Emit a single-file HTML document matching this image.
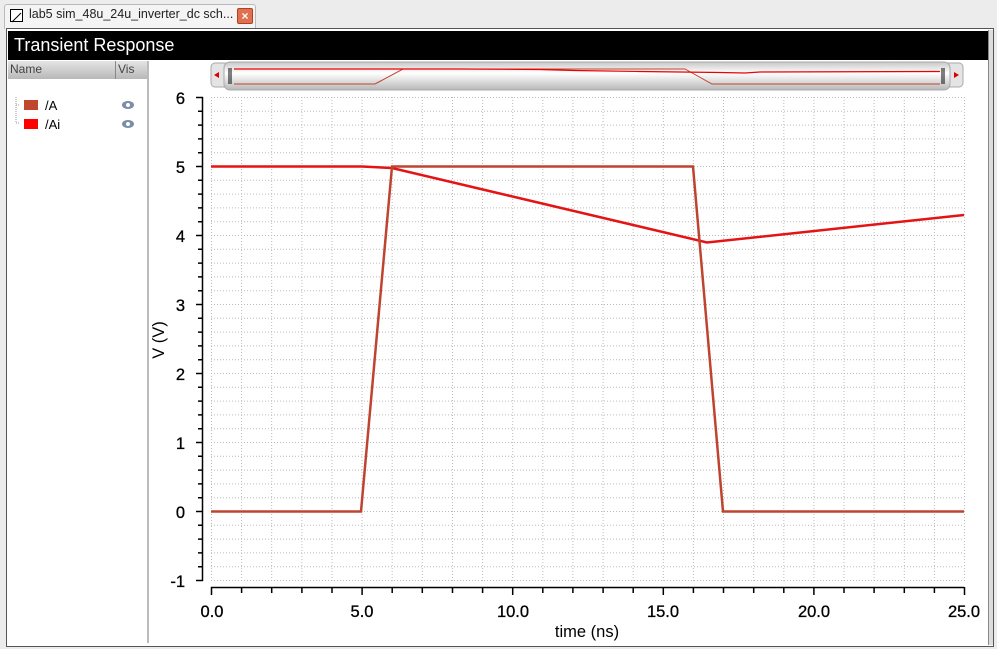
<!DOCTYPE html>
<html><head><meta charset="utf-8"><style>
body{margin:0;width:997px;height:649px;background:#ececec;overflow:hidden;font-family:"Liberation Sans",sans-serif;position:relative}
.abs{position:absolute}
</style></head><body>
<div class="abs" style="left:4px;top:4px;width:250px;height:24px;background:#f4f4f4;border:1px solid #bbb;border-bottom:none;border-radius:3px 3px 0 0"></div>
<div class="abs" style="left:10px;top:9px;width:11px;height:11px;border:1px solid #000;background:#fff"><svg width="11" height="11"><line x1="1" y1="10" x2="10" y2="1" stroke="#000"/></svg></div>
<div class="abs" style="left:29px;top:7px;font-size:12.5px;color:#222">lab5 sim_48u_24u_inverter_dc sch...</div>
<div class="abs" style="left:237px;top:8px;width:14px;height:14px;background:#e07050;border:1px solid #b04020;border-radius:2px;color:#fff;font-size:12px;line-height:14px;text-align:center;font-weight:bold">×</div>
<div class="abs" style="left:6px;top:28px;width:986px;height:617px;background:#fff;border:1px solid #555"></div>
<div class="abs" style="left:8px;top:31px;width:980px;height:29px;background:#000;color:#fff;font-size:18px;line-height:29px;padding-left:6px;box-sizing:border-box">Transient Response</div>
<div class="abs" style="left:988px;top:30px;width:4px;height:615px;background:#ddd;border-left:1px solid #888"></div>
<div class="abs" style="left:8px;top:61px;width:140px;height:18px;background:linear-gradient(#e4e4e4,#b8b8b8)"></div>
<div class="abs" style="left:115px;top:61px;width:1px;height:18px;background:#888"></div>
<div class="abs" style="left:10px;top:62px;font-size:12px;color:#444">Name</div>
<div class="abs" style="left:118px;top:62px;font-size:12px;color:#444">Vis</div>
<div class="abs" style="left:147px;top:61px;width:2px;height:582px;background:#bbb"></div>
<svg class="abs" style="left:8px;top:95px" width="140" height="40">
<path d="M8 2V28M8 10H12M8 28H12" stroke="#999" stroke-dasharray="1 1"/>
<rect x="16" y="5" width="14" height="10" fill="#c0462e"/><rect x="16" y="24" width="14" height="10" fill="#f00"/>
<text x="37" y="15" font-size="13" font-family="Liberation Sans">/A</text><text x="37" y="34" font-size="13" font-family="Liberation Sans">/Ai</text>
<ellipse cx="120" cy="10" rx="6" ry="4" fill="#7a8ea8"/><circle cx="120" cy="10" r="2" fill="#fff"/>
<ellipse cx="120" cy="29" rx="6" ry="4" fill="#7a8ea8"/><circle cx="120" cy="29" r="2" fill="#fff"/>
</svg>
<svg class="abs" style="left:0;top:0" width="997" height="649" font-family="Liberation Sans">
<defs><linearGradient id="g" x1="0" y1="0" x2="0" y2="1"><stop offset="0" stop-color="#c8c8c8"/><stop offset="0.4" stop-color="#fff"/><stop offset="1" stop-color="#b8b8b8"/></linearGradient></defs>
<rect x="211" y="63" width="752" height="24" rx="4" fill="#e4e4e4" stroke="#aaa"/>
<rect x="224" y="62" width="726" height="28" rx="6" fill="url(#g)" stroke="#aaa"/>
<path d="M214 75l5-3v6z M959 75l-5-3v6z" fill="#d00"/>
<path d="M229 68v16M231 68v16M942 68v16M944 68v16" stroke="#000"/>
<path d="M234 84H375L403 69H685L712 84H940" fill="none" stroke="#c0462e"/>
<path d="M234 69H460L540 69.5L575 70.5L640 71.5L720 72.5L745 73L760 72L940 71.5" fill="none" stroke="#e00" stroke-width="1.2"/>
<g stroke="#bbb" stroke-dasharray="1 2" stroke-width="1">
<path d="M211 97.5H964M211 111.3H964M211 125.1H964M211 138.9H964M211 152.7H964M211 166.5H964M211 180.3H964M211 194.1H964M211 207.9H964M211 221.7H964M211 235.5H964M211 249.3H964M211 263.1H964M211 276.9H964M211 290.7H964M211 304.5H964M211 318.3H964M211 332.1H964M211 345.9H964M211 359.7H964M211 373.5H964M211 387.3H964M211 401.1H964M211 414.9H964M211 428.7H964M211 442.5H964M211 456.3H964M211 470.1H964M211 483.9H964M211 497.7H964M211 511.5H964M211 525.3H964M211 539.1H964M211 552.9H964M211 566.7H964M211 580.5H964"/>
<path d="M211.5 97V581M241.6 97V581M271.7 97V581M301.9 97V581M332 97V581M362.1 97V581M392.2 97V581M422.3 97V581M452.5 97V581M482.6 97V581M512.7 97V581M542.8 97V581M572.9 97V581M603.1 97V581M633.2 97V581M663.3 97V581M693.4 97V581M723.5 97V581M753.7 97V581M783.8 97V581M813.9 97V581M844 97V581M874.1 97V581M904.3 97V581M934.4 97V581M964.5 97V581"/>
</g>
<g stroke="#000" stroke-width="1.5" fill="none">
<path d="M202.5 97V581"/>
<path d="M196 97.5H203M198 111.3H203M198 125.1H203M198 138.9H203M198 152.7H203M196 166.5H203M198 180.3H203M198 194.1H203M198 207.9H203M198 221.7H203M196 235.5H203M198 249.3H203M198 263.1H203M198 276.9H203M198 290.7H203M196 304.5H203M198 318.3H203M198 332.1H203M198 345.9H203M198 359.7H203M196 373.5H203M198 387.3H203M198 401.1H203M198 414.9H203M198 428.7H203M196 442.5H203M198 456.3H203M198 470.1H203M198 483.9H203M198 497.7H203M196 511.5H203M198 525.3H203M198 539.1H203M198 552.9H203M198 566.7H203M196 580.5H203"/>
<path d="M211 587.5H964"/>
<path d="M211.5 587V595M241.6 587V593M271.7 587V593M301.9 587V593M332 587V593M362.1 587V595M392.2 587V593M422.3 587V593M452.5 587V593M482.6 587V593M512.7 587V595M542.8 587V593M572.9 587V593M603.1 587V593M633.2 587V593M663.3 587V595M693.4 587V593M723.5 587V593M753.7 587V593M783.8 587V593M813.9 587V595M844 587V593M874.1 587V593M904.3 587V593M934.4 587V593M964.5 587V595"/>
</g>
<g font-size="16.5" text-anchor="end" fill="#000" stroke="#000" stroke-width="0.3">
<text x="185" y="104">6</text><text x="185" y="173">5</text><text x="185" y="242">4</text><text x="185" y="311">3</text><text x="185" y="380">2</text><text x="185" y="449">1</text><text x="185" y="518">0</text><text x="185" y="587">-1</text>
</g>
<g font-size="16.5" text-anchor="middle" fill="#000" stroke="#000" stroke-width="0.3">
<text x="212" y="617">0.0</text><text x="362" y="617">5.0</text><text x="513" y="617">10.0</text><text x="663" y="617">15.0</text><text x="814" y="617">20.0</text><text x="964" y="617">25.0</text>
<text x="587" y="637" stroke-width="0">time (ns)</text>
<text transform="translate(164,340) rotate(-90)" stroke-width="0">V (V)</text>
</g>
<path d="M211 166.5H362L392 168L707 242.5L964 215" fill="none" stroke="#e41414" stroke-width="2.5"/>
<path d="M211 511.5H361L392 166.5H693L723 511.5H964" fill="none" stroke="#bf4430" stroke-width="2.5"/>
</svg>
</body></html>
